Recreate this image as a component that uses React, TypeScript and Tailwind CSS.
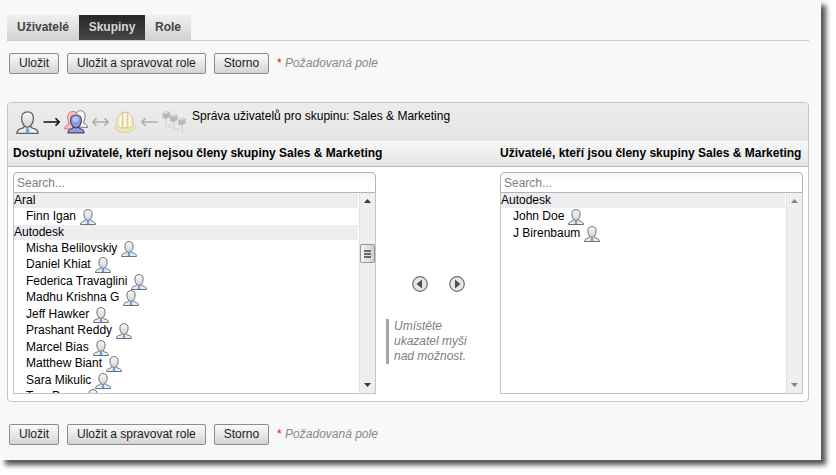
import type { ReactNode } from "react";

type Group = { company: string; people: string[]; tallFirst?: boolean };

const available: Group[] = [
  { company: "Aral", people: ["Finn Igan"], tallFirst: true },
  {
    company: "Autodesk",
    people: [
      "Misha Belilovskiy",
      "Daniel Khiat",
      "Federica Travaglini",
      "Madhu Krishna G",
      "Jeff Hawker",
      "Prashant Reddy",
      "Marcel Bias",
      "Matthew Biant",
      "Sara Mikulic",
      "Tom Perry",
    ],
  },
];

const members: Group[] = [
  { company: "Autodesk", people: ["John Doe", "J Birenbaum"], tallFirst: true },
];

function UserIcon({ className }: { className: string }) {
  return (
    <svg viewBox="0 0 23 23" className={className} aria-hidden="true">
      <defs>
        <linearGradient id="headShade" x1="0" y1="0" x2="0" y2="1">
          <stop offset="0" stopColor="#fbfbfb" />
          <stop offset="1" stopColor="#cfd2d6" />
        </linearGradient>
      </defs>
      <g stroke="#5e6166" strokeWidth="1.300" strokeLinejoin="round">
        <path d="M.8 22.300c.2-3.300 1.800-4.300 5-4.900 2-.5 2.700-1.400 2.700-3h6c0 1.600.7 2.500 2.700 3 3.200.6 4.800 1.600 5 4.900z" fill="#eceef1" />
        <path d="M11.500.8c4 0 5.900 2.600 5.900 6.400 0 4.300-2.500 9.200-5.900 9.200S5.600 11.500 5.600 7.200C5.600 3.400 7.500.8 11.500.8z" fill="url(#headShade)" />
      </g>
      <path d="M10 17.300h3l.4 4.400H9.600z" fill="#5fa5ea" />
    </svg>
  );
}

function GroupIcon() {
  return (
    <svg viewBox="0 0 24 24" className="h-6 w-6" aria-hidden="true">
      <g strokeWidth="1" strokeLinejoin="round">
        <path d="M12 17V9c-1-5 1-8.300 4.500-8.300S21.500 3.500 21 8l-1.500 5c2.500 1 4 2 4 4.500z" fill="#f6f6f7" stroke="#77797d" />
        <path d="M.6 19c0-3 2-4 4.400-5L3.500 8c0-4 2.200-6.500 5.500-6.500S14 4 14 8l-2 7v4z" fill="#f6bdbb" stroke="#c28386" />
      </g>
      <g stroke="#474a62" strokeWidth="1.200" strokeLinejoin="round">
        <path d="M4 22.900c0-2.600 1.300-3.800 4.200-4.400l1.800-2h4l1.800 2c2.900.6 4.200 1.800 4.200 4.400z" fill="#959be0" />
        <path d="M12 5c3.600 0 5.400 2.300 5.400 5.400 0 3.600-2.200 7.400-5.400 7.400s-5.400-3.800-5.400-7.400C6.600 7.300 8.400 5 12 5z" fill="#8d99e6" />
      </g>
      <ellipse cx="11.500" cy="9.300" rx="3" ry="2.800" fill="#bcc6f5" />
    </svg>
  );
}

function HelmetIcon() {
  return (
    <svg viewBox="0 0 24 24" className="h-6 w-6" aria-hidden="true">
      <path
        d="M3.500 15C3 7.500 7 2 12 2s9 5.500 8.500 13l2 2.500c-1.500 3.300-6 5-10.500 5s-9-1.700-10.500-5z"
        fill="#f2e5b6"
        stroke="#d5cbb0"
        strokeWidth="1"
      />
      <path d="M7.300 5.500v11.300M16.700 5.500v11.300" stroke="#fffdf6" strokeWidth="1.600" />
      <path d="M9.500 2.500h5v15h-5z" fill="#f5ebc6" stroke="#cfc4a2" strokeWidth=".8" />
      <path d="M12 3v14.300" stroke="#fffdf6" strokeWidth="1.200" />
      <path d="M3.200 15.500c5 3.600 12.600 3.600 17.600 0" fill="none" stroke="#d5cbb0" strokeWidth="1" />
    </svg>
  );
}

function BlocksIcon() {
  return (
    <svg viewBox="0 0 24 24" className="h-6 w-6" aria-hidden="true">
      <path d="M4 8v8h5M12 11v8h4M20 14v8" fill="none" stroke="#d6d6d6" strokeWidth="1.500" />
      {[[0, 1], [7.500, 4], [15.500, 7.500]].map(([x, y]) => (
        <g key={x} transform={`translate(${x} ${y})`}>
          <path d="M.500 2l4.500-2 3 1v5l-4 2-3.500-1z" fill="#b9b9b9" />
          <path d="M.500 2l4.500-2 3 1-4 2z" fill="#d9d9d9" />
        </g>
      ))}
      <path d="M6 15h4v3H6zM13 18h4v3h-4zM19 21h4v2h-4z" fill="#dcdcdc" />
    </svg>
  );
}

function Arrow({ color, left, right }: { color: string; left?: boolean; right?: boolean }) {
  return (
    <svg viewBox="0 0 17 10" className="h-[10px] w-[17px]" fill="none" stroke={color} strokeWidth="1.600" aria-hidden="true">
      <path d="M.500 5h16" />
      {left && <path d="M4.500 1.200L.9 5l3.600 3.800" />}
      {right && <path d="M12.500 1.200L16.100 5l-3.600 3.800" />}
    </svg>
  );
}

function PushButton({ children }: { children: ReactNode }) {
  return (
    <button
      type="button"
      className="h-[21px] rounded-[2px] border border-[#8c8c8c] bg-linear-to-b from-[#fbfbfb] to-[#d4d4d4] px-[9px] leading-[19px] text-[#1c1c1c]"
    >
      {children}
    </button>
  );
}

function Actions() {
  return (
    <div className="flex items-center gap-2 pl-0.5">
      <PushButton>Uložit</PushButton>
      <PushButton>Uložit a spravovat role</PushButton>
      <PushButton>Storno</PushButton>
      <p className="text-[#888888] italic">
        <span className="text-[#ff0000] not-italic">*</span> Požadovaná pole
      </p>
    </div>
  );
}

function ScrollBar({ thumb }: { thumb?: boolean }) {
  const tone = thumb ? "#3a3a3a" : "#858585";
  return (
    <div className="flex w-4 shrink-0 flex-col items-center border-l border-[#e3e3e3] bg-[#efefef] py-1.5">
      <svg viewBox="0 0 7 4" className="h-1 w-[7px]" aria-hidden="true">
        <path d="M0 4L3.500 0 7 4z" fill={tone} />
      </svg>
      {thumb && (
        <div className="mt-[41px] flex h-[19px] w-[15px] flex-col items-center justify-center gap-px rounded-[2px] border border-[#969696] bg-linear-to-r from-[#f7f7f7] to-[#cfcfd1]">
          {[0, 1, 2].map((n) => (
            <span key={n} className="h-0.5 w-[7px] bg-[#6a6a6a]" />
          ))}
        </div>
      )}
      <svg viewBox="0 0 7 4" className="mt-auto h-1 w-[7px]" aria-hidden="true">
        <path d="M0 0L3.500 4 7 0z" fill={tone} />
      </svg>
    </div>
  );
}

function PeopleBox({ label, groups, scrolls }: { label: string; groups: Group[]; scrolls?: boolean }) {
  return (
    <div>
      <input
        type="text"
        aria-label={label}
        placeholder="Search..."
        className="block h-[21px] w-full rounded-t-[4px] border border-[#b4b4b4] bg-linear-to-b from-[#f3f3f3] to-white to-40% px-[3px] placeholder:text-[#808080]"
      />
      <div className="flex h-[201px] gap-px border border-t-0 border-[#c3c3c3] bg-white">
        <div className="min-w-0 flex-1 overflow-hidden">
          {groups.map((group) => (
            <section key={group.company}>
              <h3 className="h-[15px] bg-[#ededef] leading-[15px]">{group.company}</h3>
              <ul>
                {group.people.map((name) => (
                  <li
                    key={name}
                    className={`flex gap-1 pl-3 leading-4 ${
                      group.tallFirst ? "odd:h-[17px] even:h-4" : "odd:h-4 even:h-[17px]"
                    }`}
                  >
                    {name}
                    <UserIcon className="mt-px h-4 w-4 shrink-0" />
                  </li>
                ))}
              </ul>
            </section>
          ))}
        </div>
        <ScrollBar thumb={scrolls} />
      </div>
    </div>
  );
}

function MoveButton({ label, path }: { label: string; path: string }) {
  return (
    <button type="button" aria-label={label} className="h-4 w-4">
      <svg viewBox="0 0 16 16" className="h-4 w-4">
        <circle cx="8" cy="8" r="7.300" fill="#e6e7e8" stroke="#6e7073" strokeWidth="1.200" />
        <path d={path} fill="#4c5056" />
      </svg>
    </button>
  );
}

const tab = "h-[25px] bg-linear-to-b from-[#f0f0f0] to-[#d2d2d2] text-center text-[#444444]";
const activeTab = "h-[25px] bg-linear-to-b from-[#262626] to-[#474747] text-center text-[#d6d6d6]";

export default function App() {
  return (
    <div className="bg-white pr-[15px] pb-[15px] font-['Liberation_Sans',Arial,sans-serif] text-[12px] leading-[15px] text-black">
      <main className="bg-[#f8f8f8] pt-[15px] pr-3 pb-[15px] pl-[7px] shadow-[5px_5px_5px_0_#555555]">
        <nav className="flex border-b border-[#c8c8c8] font-bold">
          <button type="button" className={`${tab} w-[72px]`}>Uživatelé</button>
          <button type="button" className={`${activeTab} w-[66px]`}>Skupiny</button>
          <button type="button" className={`${tab} w-[46px]`}>Role</button>
        </nav>
        <div className="pt-3 pb-7">
          <Actions />
        </div>
        <section className="overflow-hidden rounded-[4px] border border-[#c6c6c6] bg-white">
          <header className="flex h-[38px] items-start bg-linear-to-b from-[#ececec] to-[#e6e6e6] pl-2">
            <div className="flex items-center gap-1 pt-[7px]">
              <UserIcon className="h-[23px] w-[23px]" />
              <Arrow color="#111111" right />
              <GroupIcon />
              <Arrow color="#acacac" left right />
              <HelmetIcon />
              <Arrow color="#acacac" left />
              <BlocksIcon />
            </div>
            <h1 className="pt-1.5 pl-1.5">Správa uživatelů pro skupinu: Sales &amp; Marketing</h1>
          </header>
          <div className="grid grid-cols-[1fr_124px_303px] border-b border-[#b9b9b9] bg-linear-to-b from-[#f8f8f8] to-[#e5e5e5] px-[5px] font-bold leading-[25px]">
            <h2 className="col-span-2">Dostupní uživatelé, kteří nejsou členy skupiny Sales &amp; Marketing</h2>
            <h2>Uživatelé, kteří jsou členy skupiny Sales &amp; Marketing</h2>
          </div>
          <div className="grid grid-cols-[1fr_124px_303px] px-[5px] pt-[5px] pb-[7px]">
            <PeopleBox label="Hledat dostupné uživatele" groups={available} scrolls />
            <div className="flex flex-col pt-[104px]">
              <div className="flex justify-center gap-[21px]">
                <MoveButton label="Odebrat ze skupiny" path="M10 3.500v9L4.500 8z" />
                <MoveButton label="Přidat do skupiny" path="M6 3.500v9L11.500 8z" />
              </div>
              <p className="mt-[27px] mr-3 ml-[10px] border-l-[3px] border-[#a5a5a5] pl-[5px] text-[#808080] italic">
                Umístěte ukazatel myši nad možnost.
              </p>
            </div>
            <PeopleBox label="Hledat členy skupiny" groups={members} />
          </div>
        </section>
        <div className="pt-[22px]">
          <Actions />
        </div>
      </main>
    </div>
  );
}
